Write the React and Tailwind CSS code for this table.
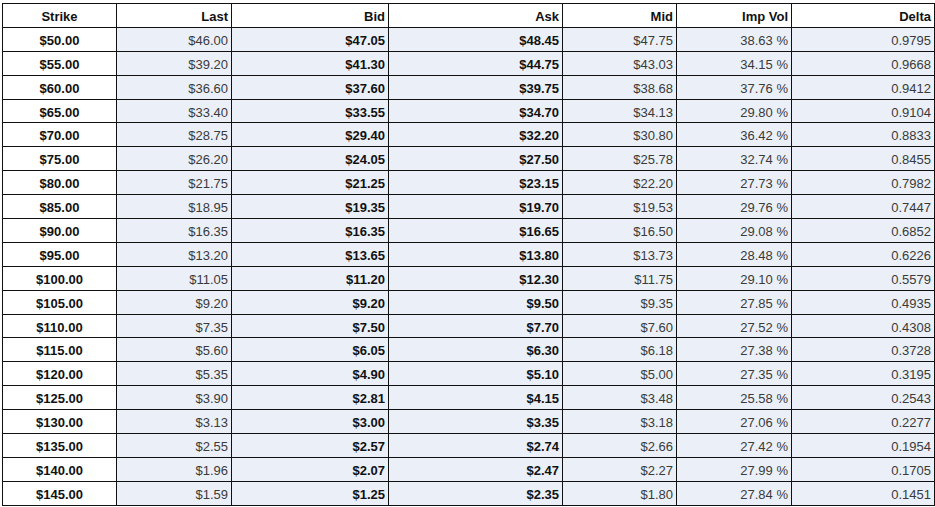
const rows = [
  ['$50.00', '$46.00', '$47.05', '$48.45', '$47.75', '38.63 %', '0.9795'],
  ['$55.00', '$39.20', '$41.30', '$44.75', '$43.03', '34.15 %', '0.9668'],
  ['$60.00', '$36.60', '$37.60', '$39.75', '$38.68', '37.76 %', '0.9412'],
  ['$65.00', '$33.40', '$33.55', '$34.70', '$34.13', '29.80 %', '0.9104'],
  ['$70.00', '$28.75', '$29.40', '$32.20', '$30.80', '36.42 %', '0.8833'],
  ['$75.00', '$26.20', '$24.05', '$27.50', '$25.78', '32.74 %', '0.8455'],
  ['$80.00', '$21.75', '$21.25', '$23.15', '$22.20', '27.73 %', '0.7982'],
  ['$85.00', '$18.95', '$19.35', '$19.70', '$19.53', '29.76 %', '0.7447'],
  ['$90.00', '$16.35', '$16.35', '$16.65', '$16.50', '29.08 %', '0.6852'],
  ['$95.00', '$13.20', '$13.65', '$13.80', '$13.73', '28.48 %', '0.6226'],
  ['$100.00', '$11.05', '$11.20', '$12.30', '$11.75', '29.10 %', '0.5579'],
  ['$105.00', '$9.20', '$9.20', '$9.50', '$9.35', '27.85 %', '0.4935'],
  ['$110.00', '$7.35', '$7.50', '$7.70', '$7.60', '27.52 %', '0.4308'],
  ['$115.00', '$5.60', '$6.05', '$6.30', '$6.18', '27.38 %', '0.3728'],
  ['$120.00', '$5.35', '$4.90', '$5.10', '$5.00', '27.35 %', '0.3195'],
  ['$125.00', '$3.90', '$2.81', '$4.15', '$3.48', '25.58 %', '0.2543'],
  ['$130.00', '$3.13', '$3.00', '$3.35', '$3.18', '27.06 %', '0.2277'],
  ['$135.00', '$2.55', '$2.57', '$2.74', '$2.66', '27.42 %', '0.1954'],
  ['$140.00', '$1.96', '$2.07', '$2.47', '$2.27', '27.99 %', '0.1705'],
  ['$145.00', '$1.59', '$1.25', '$2.35', '$1.80', '27.84 %', '0.1451'],
]

const headers = ['Strike', 'Last', 'Bid', 'Ask', 'Mid', 'Imp Vol', 'Delta']

const cell = 'border border-[#111] h-[23.9px] p-0 pt-[2px] px-[3px] leading-none'

const App = () => {
  return (
    <div className="w-[935px] h-[507px] bg-white overflow-hidden pt-[3px] pl-[2px]">
      <table
        className="table-fixed border-collapse w-[932px] text-[13px] text-[#3a3a3a]"
        style={{ fontFamily: '"Liberation Sans", Arial, sans-serif' }}
      >
        <colgroup>
          <col className="w-[114px]" />
          <col className="w-[115px]" />
          <col className="w-[157px]" />
          <col className="w-[174px]" />
          <col className="w-[114px]" />
          <col className="w-[115px]" />
          <col className="w-[143px]" />
        </colgroup>
        <thead>
          <tr>
            {headers.map((h, i) => (
              <th
                key={h}
                className={`${cell} font-bold text-[#111] ${i === 0 ? 'text-center' : 'text-right'}`}
              >
                {h}
              </th>
            ))}
          </tr>
        </thead>
        <tbody>
          {rows.map((r) => (
            <tr key={r[0]}>
              <td className={`${cell} text-center font-bold text-[#111] bg-white`}>{r[0]}</td>
              <td className={`${cell} text-right bg-[#ebf0f8]`}>{r[1]}</td>
              <td className={`${cell} text-right font-bold text-[#111] bg-[#ebf0f8]`}>{r[2]}</td>
              <td className={`${cell} text-right font-bold text-[#111] bg-[#ebf0f8]`}>{r[3]}</td>
              <td className={`${cell} text-right bg-[#ebf0f8]`}>{r[4]}</td>
              <td className={`${cell} text-right bg-[#ebf0f8]`}>{r[5]}</td>
              <td className={`${cell} text-right bg-[#ebf0f8]`}>{r[6]}</td>
            </tr>
          ))}
        </tbody>
      </table>
    </div>
  )
}

export default App
